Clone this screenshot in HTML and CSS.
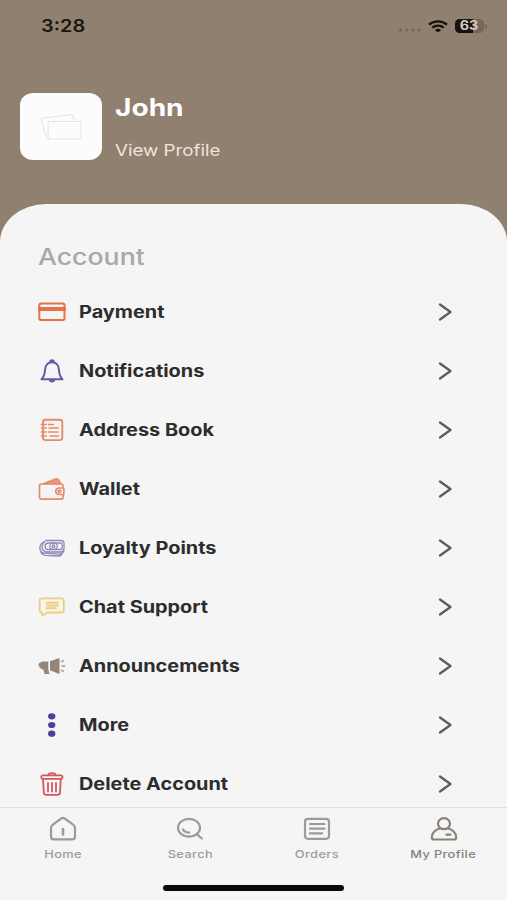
FILE: index.html
```html
<!DOCTYPE html>
<html lang="en">
<head>
<meta charset="utf-8">
<title>My Profile</title>
<link rel="stylesheet" href="styles.css">
</head>
<body>
<div class="screen">
  <header class="hero">
    <div class="status">
      <span class="wide time">3:28</span>
      <div class="status-icons">
        <svg class="dots" width="24" height="4" viewBox="0 0 24 4"><circle cx="2.5" cy="2" r="1.5"/><circle cx="8.7" cy="2" r="1.5"/><circle cx="14.9" cy="2" r="1.5"/><circle cx="21.1" cy="2" r="1.5"/></svg>
        <svg class="wifi" width="20" height="13" viewBox="0 0 20 13"><path d="M1 4.7C6 .3 14 .3 19 4.7M4.3 7.6c3.3-2.7 8.1-2.7 11.4 0"/><path class="solid" d="M6.9 9.9c1.8-1.4 4.4-1.4 6.2 0L10 12.6z"/></svg>
        <div class="battery"><span>63</span></div>
        <i class="nub"></i>
      </div>
    </div>
    <div class="user">
      <div class="avatar">
        <svg width="42" height="28" viewBox="0 0 42 28"><path d="M7 25.500 5.500 22 1 5.500 32.500 1.500 34 8"/><path class="front" d="M8.500 8.500H41v17.500H8.500z"/></svg>
      </div>
      <div class="user-text">
        <div class="wide name">John</div>
        <div class="wide view">View Profile</div>
      </div>
    </div>
  </header>
  <main class="panel">
    <h1 class="wide heading">Account</h1>
    <ul class="menu">
      <li><svg class="icon" viewBox="0 0 28 26" stroke="#ea7049" stroke-width="2"><rect x="1.300" y="4.500" width="25.200" height="16.500" rx="1.800"/><path d="M1.500 10h25" stroke-width="3.800"/></svg><span class="wide label">Payment</span><svg class="chev" viewBox="0 0 14 18"><path d="M2 1.500 12.500 9 2 16.500"/></svg></li>
      <li><svg class="icon" viewBox="0 0 28 26" stroke="#625aa5" stroke-width="2"><path d="M3.500 21.300c2.800-2.800 3.300-5.400 3.500-9.300.2-5.100 3.200-7.800 7-7.800s6.800 2.700 7 7.800c.2 3.900.7 6.500 3.500 9.300zM12.200 4c0-2.400 3.600-2.400 3.600 0M11.800 22c.4 2 4 2 4.400 0"/></svg><span class="wide label">Notifications</span><svg class="chev" viewBox="0 0 14 18"><path d="M2 1.500 12.500 9 2 16.500"/></svg></li>
      <li><svg class="icon" viewBox="0 0 28 26" stroke="#e78a6a" stroke-width="1.900"><rect x="5" y="2.800" width="19.300" height="20.300" rx="2.500"/><path d="M3.300 7.500h5M3.300 11h5M3.300 15h5M3.300 19h5M10.500 7.500h5M11 11h9.500M10.500 15h9.500M12 19h8.500" stroke-width="1.400"/></svg><span class="wide label">Address Book</span><svg class="chev" viewBox="0 0 14 18"><path d="M2 1.500 12.500 9 2 16.500"/></svg></li>
      <li><svg class="icon" viewBox="0 0 28 26" stroke="#e78a6a" stroke-width="1.700"><path d="M25 11.500V10q0-2-2-2H3.500Q1.500 8 1.500 10v11q0 2.200 2.200 2.200H23q2 0 2-2v-2.500"/><path class="peach" d="M6 7.500 17.500 3Q19.500 2.300 20.700 4l1.800 3.500z"/><path d="M25.800 12v6.500H21q-3.300-.3-3.300-3.200T21 12z"/><circle cx="21.500" cy="15.200" r="1.200"/></svg><span class="wide label">Wallet</span><svg class="chev" viewBox="0 0 14 18"><path d="M2 1.500 12.500 9 2 16.500"/></svg></li>
      <li><svg class="icon" viewBox="0 0 28 26" stroke="#9088b8" stroke-width="1.300"><path d="M8 5.500h15q3 0 3 3v5q0 2.500-3 3.500H8.500Q4 16 4 12t4-6.500z"/><path d="M10 8h12.500q1.700 0 1.700 2v2.500q0 2-2 2H10q-3 0-3-3T10 8z"/><ellipse cx="15.500" cy="11.300" rx="3.800" ry="3.400"/><circle cx="15.500" cy="11.300" r="1.300"/><path d="M5.500 7C1 9.500.5 15.500 5 18l16.500 1.200q3.500-.5 4.500-3.700M2.500 15.500q.5 4 4.500 4.800l13.500.7q3-.2 3.500-2.500"/></svg><span class="wide label">Loyalty Points</span><svg class="chev" viewBox="0 0 14 18"><path d="M2 1.500 12.500 9 2 16.500"/></svg></li>
      <li><svg class="icon" viewBox="0 0 28 26" stroke="#efcf7d" stroke-width="1.800"><path d="M4 4.300h19.500q2.300 0 2.300 2.200v9.700q0 2.300-2.300 2.300H9.500L4 21.800v-3.300q-2.300 0-2.300-2.300V6.500Q1.700 4.300 4 4.300z"/><path d="M8.500 8.800h11.500M8.500 11.500h11.500M8.500 14.200h9.500" stroke-width="1.900"/></svg><span class="wide label">Chat Support</span><svg class="chev" viewBox="0 0 14 18"><path d="M2 1.500 12.500 9 2 16.500"/></svg></li>
      <li><svg class="icon announce" viewBox="0 0 28 26"><path d="M.5 11.500Q1 9.500 5 8.500h5.300v8l1.200 4.500H6.700L5.200 16.500C2.500 16.300.8 14 .5 11.500zM12 8.200 21.500 5v16L12 17.200z"/><path class="waves" d="M23.500 8.500l1.800-.7M24.300 13h2.200M23.500 17.500l1.800.7"/></svg><span class="wide label">Announcements</span><svg class="chev" viewBox="0 0 14 18"><path d="M2 1.500 12.500 9 2 16.500"/></svg></li>
      <li><svg class="icon more" viewBox="0 0 28 26"><ellipse cx="13.700" cy="4.300" rx="3.700" ry="3.100"/><ellipse cx="13.700" cy="13" rx="3.700" ry="3.100"/><ellipse cx="13.700" cy="21.700" rx="3.700" ry="3.100"/></svg><span class="wide label">More</span><svg class="chev" viewBox="0 0 14 18"><path d="M2 1.500 12.500 9 2 16.500"/></svg></li>
      <li><svg class="icon" viewBox="0 0 28 26" stroke="#d3585e" stroke-width="1.800"><rect x="3.200" y="4.300" width="21.300" height="3.500" rx="1.700"/><path d="M10.300 4.200c0-2.800 7.200-2.800 7.200 0M5 7.800l.8 13.800q.2 2.200 2.500 2.200h11.200q2.300 0 2.500-2.200L22.800 7.800M10 12v8.500M14 12v8.500M18 12v8.500"/></svg><span class="wide label">Delete Account</span><svg class="chev" viewBox="0 0 14 18"><path d="M2 1.500 12.500 9 2 16.500"/></svg></li>
    </ul>
  </main>
  <nav class="tabs">
    <div class="tab"><svg viewBox="0 0 28 26"><path d="M2 12q0-2 1.600-3.200L12.300 2.500q1.700-1.200 3.400 0l8.700 6.300Q26 10 26 12v8.500q0 2.800-2.800 2.800H4.800Q2 23.300 2 20.500z"/><path d="M14 13v5.500" stroke-width="2.600"/></svg><span class="wide">Home</span></div>
    <div class="tab"><svg viewBox="0 0 28 26"><ellipse cx="13" cy="11.800" rx="11" ry="8.900"/><path d="M20.800 18.200l5 4.300M7 13.500q2 3.200 6.200 3.200"/></svg><span class="wide">Search</span></div>
    <div class="tab"><svg viewBox="0 0 28 26"><rect x="2" y="2.800" width="24" height="20" rx="3"/><path d="M7 8h14.500M7 12.700h14.500M7 17.400h12"/></svg><span class="wide">Orders</span></div>
    <div class="tab active"><svg viewBox="0 0 28 26"><ellipse cx="14" cy="7.700" rx="6" ry="5.500"/><path d="M9.500 12.500C5 14 1.800 17.500 1.800 21.500q0 2 2.200 2h20q2.200 0 2.200-2c0-4-3.200-7.500-7.700-9M16.500 18.700h4"/></svg><span class="wide">My Profile</span></div>
  </nav>
  <div class="home-bar"></div>
</div>
</body>
</html>
```
FILE: styles.css
```css
* { box-sizing: border-box; }
body { margin: 0; font-family: Inter, "Liberation Sans", sans-serif; }
svg { display: block; fill: none; stroke-linecap: round; stroke-linejoin: round; }
.screen { width: 507px; height: 900px; display: flex; flex-direction: column; background: #f5f5f5; overflow: hidden; }
.wide { display: inline-block; transform: scaleX(1.17); transform-origin: left center; white-space: nowrap; }

.hero { height: 244px; flex: none; background: #908070; }
.status { height: 52px; padding: 0 20px 0 41px; display: flex; justify-content: space-between; align-items: center; }
.time { font-size: 17px; font-weight: 600; color: #1b1612; }
.status-icons { display: flex; align-items: center; }
.dots { fill: #746658; margin: 8px 6px 0 0; }
.wifi { stroke: #17120e; stroke-width: 2.3; stroke-linecap: butt; margin-right: 7px; }
.wifi .solid { fill: #17120e; stroke: none; }
.battery { width: 29px; height: 14px; border-radius: 4.5px; background: linear-gradient(90deg, #17120e 63%, #74685c 63%); color: #d3cbc3; font-size: 12.5px; font-weight: 700; line-height: 14px; text-align: center; }
.battery span { display: inline-block; transform: scaleX(1.15); }
.nub { width: 2px; height: 5px; margin-left: 1px; border-radius: 0 2px 2px 0; background: #74685c; }

.user { display: flex; gap: 13px; padding: 41px 20px 0; }
.avatar { width: 82px; height: 67px; border-radius: 13px / 12px; background: #fcfcfc; display: grid; place-items: center; }
.avatar svg { stroke: #e5e5e5; stroke-width: 1; }
.avatar .front { fill: #fcfcfc; }
.user-text { display: flex; flex-direction: column; align-items: flex-start; color: #fff; }
.name { font-size: 24px; font-weight: 700; line-height: 30px; }
.view { margin-top: 17px; font-size: 16px; line-height: 20px; color: #efe5da; }

.panel { height: 603px; flex: none; margin-top: -40px; padding: 38px 55px 0 38px; border-radius: 46px 46px 0 0 / 38px 38px 0 0; background: #f5f5f5; }
.heading { margin: 0; font-size: 22.8px; font-weight: 500; line-height: 30px; color: #a8a8a8; display: block; width: max-content; }
.menu { list-style: none; margin: 10px 0 0; padding: 0; }
.menu li { height: 59.1px; display: flex; align-items: center; }
.icon { width: 28px; height: 26px; margin-right: 13px; }
.icon .peach { fill: #e99a7f; }
.announce { fill: #948579; }
.announce .waves { stroke: #b5a99e; stroke-width: 1.8; }
.more { fill: #4b419b; }
.label { font-size: 17px; font-weight: 700; color: #2d2d2d; }
.chev { width: 14px; height: 18px; margin-left: auto; stroke: #5b5b5b; stroke-width: 2.2; }

.tabs { height: 78px; flex: none; border-top: 1px solid #dedede; display: grid; grid-template-columns: repeat(4, 1fr); background: #f5f5f5; color: #9b9b9b; }
.tab { display: flex; flex-direction: column; align-items: center; padding-top: 8px; }
.tab svg { width: 28px; height: 26px; stroke: currentColor; stroke-width: 2.2; }
.tab .wide { transform-origin: center; margin-top: 5px; font-size: 11px; font-weight: 500; line-height: 14px; letter-spacing: 0.3px; }
.active { color: #8b8075; }
.home-bar { width: 181px; height: 6px; margin: 0 auto; border-radius: 3px; background: #0a0a0a; }
```
